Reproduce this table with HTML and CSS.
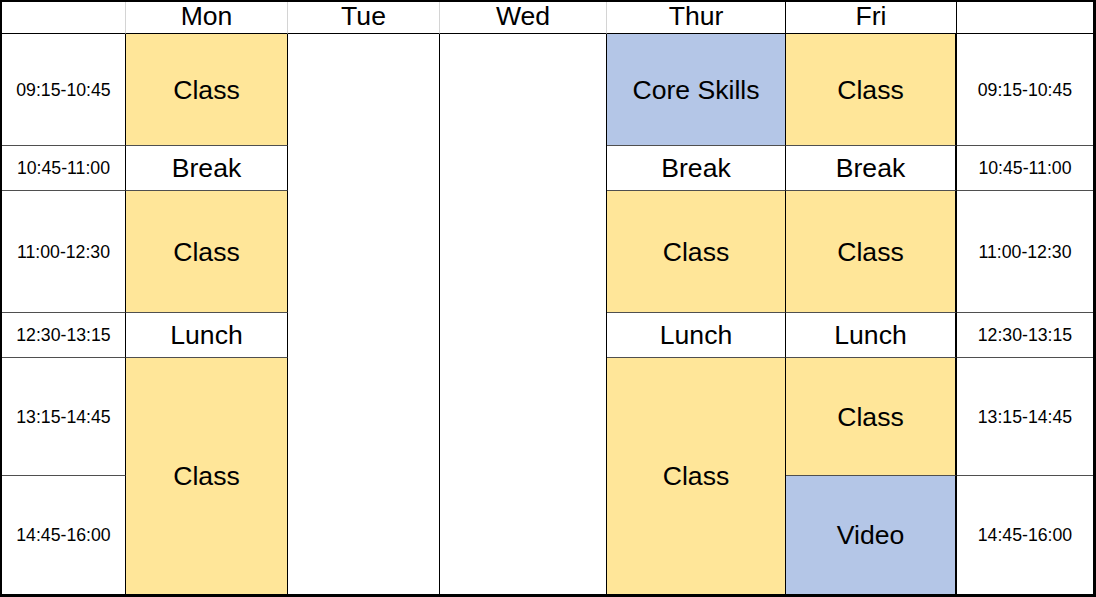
FILE: index.html
```html
<!DOCTYPE html>
<html lang="en">
<head>
<meta charset="utf-8">
<title>Timetable</title>
<link rel="stylesheet" href="styles.css">
</head>
<body>
<div class="sheet">
  <div class="cell head hl"></div>
  <div class="cell head hl">Mon</div>
  <div class="cell head hl">Tue</div>
  <div class="cell head hl">Wed</div>
  <div class="cell head hb">Thur</div>
  <div class="cell head hb">Fri</div>
  <div class="cell head last-col"></div>

  <div class="cell time">09:15-10:45</div>
  <div class="cell big yellow">Class</div>
  <div class="cell empty span6"></div>
  <div class="cell empty span6"></div>
  <div class="cell big blue">Core Skills</div>
  <div class="cell big yellow fri">Class</div>
  <div class="cell time last-col">09:15-10:45</div>

  <div class="cell time">10:45-11:00</div>
  <div class="cell big">Break</div>
  <div class="cell big">Break</div>
  <div class="cell big fri">Break</div>
  <div class="cell time last-col">10:45-11:00</div>

  <div class="cell time">11:00-12:30</div>
  <div class="cell big yellow">Class</div>
  <div class="cell big yellow">Class</div>
  <div class="cell big yellow fri">Class</div>
  <div class="cell time last-col">11:00-12:30</div>

  <div class="cell time">12:30-13:15</div>
  <div class="cell big">Lunch</div>
  <div class="cell big">Lunch</div>
  <div class="cell big fri">Lunch</div>
  <div class="cell time last-col">12:30-13:15</div>

  <div class="cell time">13:15-14:45</div>
  <div class="cell big yellow span2 last-row">Class</div>
  <div class="cell big yellow span2 last-row">Class</div>
  <div class="cell big yellow fri">Class</div>
  <div class="cell time last-col">13:15-14:45</div>

  <div class="cell time last-row">14:45-16:00</div>
  <div class="cell big blue fri last-row">Video</div>
  <div class="cell time last-col last-row">14:45-16:00</div>
</div>
</body>
</html>
```

FILE: styles.css
```css
* {
  box-sizing: border-box;
}

html, body {
  margin: 0;
  padding: 0;
  background: #ffffff;
}

.sheet {
  width: 1096px;
  height: 597px;
  display: grid;
  grid-template-columns: 124px 162px 152px 167px 179px 171px 136px;
  grid-template-rows: 32px 112px 45px 122px 45px 118px 118px;
  border-top: 2px solid #000;
  border-left: 2px solid #000;
  border-right: 3px solid #000;
  border-bottom: 3px solid #000;
  font-family: "Liberation Sans", Arial, sans-serif;
  color: #000;
}

.cell {
  display: flex;
  align-items: center;
  justify-content: center;
  border-right: 1px solid #000;
  border-bottom: 1px solid #4f4f4f;
  background: #fff;
  white-space: nowrap;
  overflow: hidden;
  padding-top: 1px;
}

.head {
  font-size: 26.6px;
  border-bottom: 1px solid #000;
  padding-top: 0;
  padding-bottom: 3px;
}

.head.hl {
  border-right-color: #d4d4d4;
}

.head.hb {
  border-right-color: #000;
}

.time {
  font-size: 17.7px;
}

.big {
  font-size: 26.6px;
}

.yellow {
  background: #ffe699;
}

.blue {
  background: #b4c6e7;
}

.fri {
  border-right-width: 2px;
}

.empty {
  border-bottom: none;
}

.span6 {
  grid-row: span 6;
}

.span2 {
  grid-row: span 2;
}

.last-col {
  border-right: none;
}

.last-row {
  border-bottom: none;
}
```
